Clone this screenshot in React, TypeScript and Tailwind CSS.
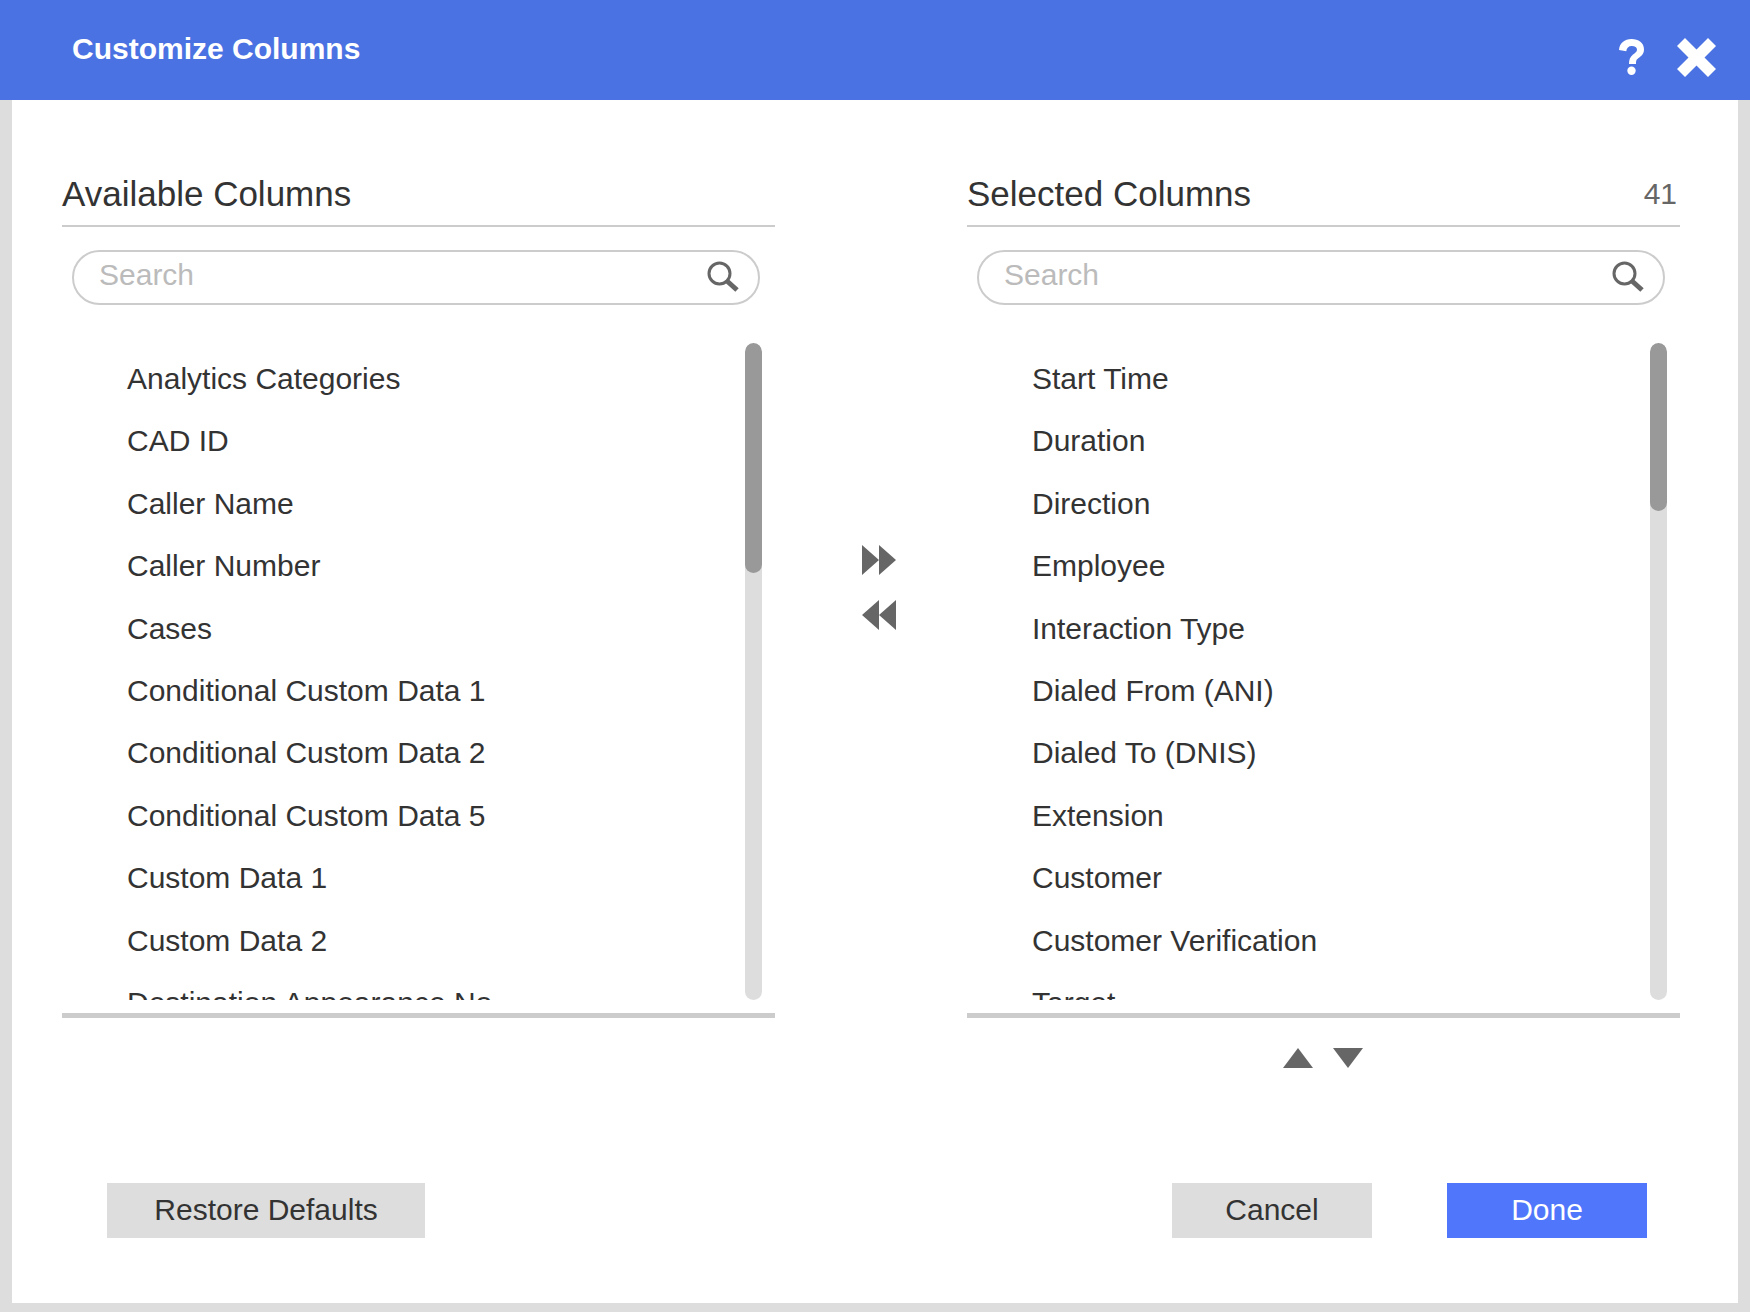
import { FC } from "react";

const availableColumns = [
  "Analytics Categories",
  "CAD ID",
  "Caller Name",
  "Caller Number",
  "Cases",
  "Conditional Custom Data 1",
  "Conditional Custom Data 2",
  "Conditional Custom Data 5",
  "Custom Data 1",
  "Custom Data 2",
  "Destination Appearance No",
];

const selectedColumns = [
  "Start Time",
  "Duration",
  "Direction",
  "Employee",
  "Interaction Type",
  "Dialed From (ANI)",
  "Dialed To (DNIS)",
  "Extension",
  "Customer",
  "Customer Verification",
  "Target",
];

interface ColumnPanelProps {
  title: string;
  count?: string;
  items: string[];
  thumbClass: string;
}

const ColumnPanel: FC<ColumnPanelProps> = ({ title, count, items, thumbClass }) => {
  return (
    <div className="w-[713px] shrink-0">
      <div className="h-[57px] pt-[2px] flex justify-between border-b-2 border-[#cccccc] text-[35px] leading-[44px] text-[#333333]">
        <span>{title}</span>
        {count && <span className="pr-[3px] text-[#666666] text-[30px]">{count}</span>}
      </div>
      <div className="mt-[23px] ml-[10px] w-[688px] h-[55px] flex items-center justify-between border-2 border-[#cccccc] rounded-[28px] pl-[25px] pr-[19px]">
        <span className="text-[30px] text-[#bbbbbb] -mt-[6px]">Search</span>
        <svg width="32" height="31" viewBox="0 0 32 31" className="-mt-[2px]">
          <circle cx="12.5" cy="12.5" r="10.5" fill="none" stroke="#666666" strokeWidth="3" />
          <path d="M20 20L30 29" fill="none" stroke="#666666" strokeWidth="5" />
        </svg>
      </div>
      <div className="mt-[38px] h-[657px] flex">
        <div className="flex-1 overflow-hidden pl-[65px] pt-[5px] text-[30px] text-[#333333]">
          {items.map((item) => (
            <div key={item} className="h-[62.4px] leading-[62.4px] whitespace-nowrap">
              {item}
            </div>
          ))}
        </div>
        <div className="w-[17px] h-full bg-[#dddddd] rounded-full mr-[13px] overflow-hidden">
          <div className={`w-full bg-[#999999] rounded-full ${thumbClass}`}></div>
        </div>
      </div>
      <div className="mt-[13px] h-[5px] bg-[#cccccc]"></div>
    </div>
  );
};

const App: FC = () => {
  return (
    <div className="w-[1750px] h-[1312px] bg-[#dddddd] flex flex-col font-['Liberation_Sans',Arial,sans-serif]">
      <div className="h-[100px] shrink-0 bg-[#4a72e2] flex items-center justify-between pl-[72px] pr-[33px]">
        <span className="text-[30px] font-bold text-white -mt-[3px]">Customize Columns</span>
        <div className="flex items-center gap-[32px] mt-[14px]">
          <svg width="25" height="36" viewBox="0 0 25 36">
            <path
              d="M0 11C0.5 4 5.5 0 12.5 0C19.5 0 25 4 25 10.5C25 15.5 21.5 17.5 19 19.5C17.5 20.7 17 21.5 17 25H10C10 20.5 11 18 14 15.5C16 13.8 18 13 18 10.7C18 8.3 16 7 12.8 7C9.5 7 7.6 9 7.3 12.3Z"
              fill="white"
            />
            <circle cx="12.5" cy="31.8" r="4.2" fill="white" />
          </svg>
          <svg width="41" height="41" viewBox="0 0 41 41">
            <path
              d="M9 1L20.5 12.5L32 1L40 9L28.5 20.5L40 32L32 40L20.5 28.5L9 40L1 32L12.5 20.5L1 9Z"
              fill="white"
            />
          </svg>
        </div>
      </div>
      <div className="flex-1 mx-[12px] mb-[9px] bg-white flex flex-col">
        <div className="flex pl-[50px] pt-[70px]">
          <ColumnPanel title="Available Columns" items={availableColumns} thumbClass="h-[230px]" />
          <div className="w-[192px] shrink-0 pl-[87px] pt-[375px] flex flex-col gap-[25px]">
            <svg width="34" height="30" viewBox="0 0 34 30">
              <path d="M0 0L17 15L0 30ZM17 0L34 15L17 30Z" fill="#666666" />
            </svg>
            <svg width="34" height="30" viewBox="0 0 34 30">
              <path d="M17 0L0 15L17 30ZM34 0L17 15L34 30Z" fill="#666666" />
            </svg>
          </div>
          <ColumnPanel
            title="Selected Columns"
            count="41"
            items={selectedColumns}
            thumbClass="h-[168px]"
          />
        </div>
        <div className="mt-[30px] ml-[1271px] flex gap-[20px]">
          <svg width="30" height="20" viewBox="0 0 30 20">
            <path d="M15 0L30 20H0Z" fill="#666666" />
          </svg>
          <svg width="30" height="20" viewBox="0 0 30 20">
            <path d="M0 0H30L15 20Z" fill="#666666" />
          </svg>
        </div>
        <div className="mt-[115px] flex text-[30px] text-[#333333]">
          <button className="ml-[95px] w-[318px] h-[55px] bg-[#dddddd] pb-[2px]">Restore Defaults</button>
          <button className="ml-[747px] w-[200px] h-[55px] bg-[#dddddd] pb-[2px]">Cancel</button>
          <button className="ml-[75px] w-[200px] h-[55px] bg-[#5077fb] text-white pb-[2px]">Done</button>
        </div>
      </div>
    </div>
  );
};

export default App;
